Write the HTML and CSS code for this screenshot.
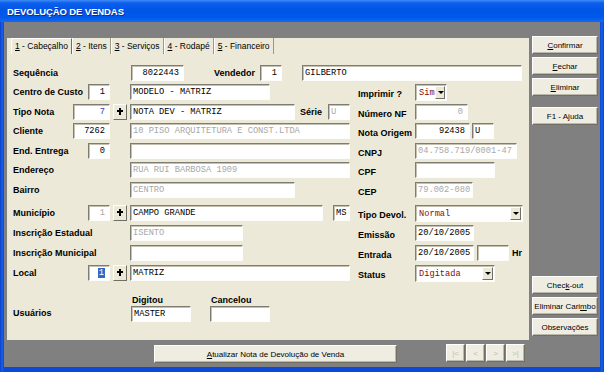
FILE: index.html
```html
<!DOCTYPE html>
<html lang="pt-BR">
<head>
    <meta charset="UTF-8">
    <title>Devolução de Vendas</title>
    <link rel="stylesheet" href="styles.css">
</head>
<body>
    <div class="window">
        <div class="titlebar">DEVOLUÇÃO DE VENDAS</div>

        <div class="client">
            <!-- Left: tabbed form + footer -->
            <div class="main-col">
                <div class="panel">
                    <div class="tabs">
                        <span class="tab active"><u>1</u> - Cabeçalho</span>
                        <span class="tab"><u>2</u> - Itens</span>
                        <span class="tab"><u>3</u> - Serviços</span>
                        <span class="tab"><u>4</u> - Rodapé</span>
                        <span class="tab"><u>5</u> - Financeiro</span>
                    </div>

                    <div class="form">
                        <!-- Sequência / Vendedor -->
                        <div class="row">
                            <div class="c-a"><span class="lbl">Sequência</span></div>
                            <div class="c-b"></div>
                            <span class="edit num w53 ml1">8022443</span>
                            <span class="lbl ml30 w46">Vendedor</span>
                            <span class="edit num w22">1</span>
                            <span class="edit w220 ml20">GILBERTO</span>
                        </div>

                        <div class="row">
                            <div class="c-a"><span class="lbl">Centro de Custo</span><span class="edit num w22">1</span></div>
                            <div class="c-b"></div>
                            <div class="c-c"><span class="edit w140">MODELO - MATRIZ</span></div>
                            <div class="c-d"><span class="lbl">Imprimir ?</span></div>
                            <div class="c-e">
                                <span class="combo w32"><span class="val red">Sim</span><span class="drop"></span></span>
                            </div>
                        </div>

                        <div class="row">
                            <div class="c-a"><span class="lbl">Tipo Nota</span><span class="edit num w37 blue">7</span></div>
                            <div class="c-b"><span class="plus"></span></div>
                            <div class="c-c">
                                <span class="edit w165">NOTA DEV - MATRIZ</span>
                                <span class="lbl serie">Série</span>
                                <span class="edit w22 off">U</span>
                            </div>
                            <div class="c-d"><span class="lbl">Número NF</span></div>
                            <div class="c-e"><span class="edit num w53 off">0</span></div>
                        </div>

                        <div class="row">
                            <div class="c-a"><span class="lbl">Cliente</span><span class="edit num w37">7262</span></div>
                            <div class="c-b"></div>
                            <div class="c-c"><span class="edit w220 off">10 PISO ARQUITETURA E CONST.LTDA</span></div>
                            <div class="c-d"><span class="lbl">Nota Origem</span></div>
                            <div class="c-e">
                                <span class="edit num w55">92438</span>
                                <span class="edit w22 ml2">U</span>
                            </div>
                        </div>

                        <div class="row">
                            <div class="c-a"><span class="lbl">End. Entrega</span><span class="edit num w22">0</span></div>
                            <div class="c-b"></div>
                            <div class="c-c"><span class="edit w220"></span></div>
                            <div class="c-d"><span class="lbl">CNPJ</span></div>
                            <div class="c-e"><span class="edit w102 off">04.758.719/0001-47</span></div>
                        </div>

                        <div class="row">
                            <div class="c-a"><span class="lbl">Endereço</span></div>
                            <div class="c-b"></div>
                            <div class="c-c"><span class="edit w220 off">RUA RUI BARBOSA 1909</span></div>
                            <div class="c-d"><span class="lbl">CPF</span></div>
                            <div class="c-e"><span class="edit w80"></span></div>
                        </div>

                        <div class="row">
                            <div class="c-a"><span class="lbl">Bairro</span></div>
                            <div class="c-b"></div>
                            <div class="c-c"><span class="edit w165 off">CENTRO</span></div>
                            <div class="c-d"><span class="lbl">CEP</span></div>
                            <div class="c-e"><span class="edit w58 off">79.002-080</span></div>
                        </div>

                        <div class="row tall gap-top">
                            <div class="c-a"><span class="lbl">Município</span><span class="edit num w22 off">1</span></div>
                            <div class="c-b"><span class="plus"></span></div>
                            <div class="c-c">
                                <span class="edit w193">CAMPO GRANDE</span>
                                <span class="edit w17 ml10">MS</span>
                            </div>
                            <div class="c-d"><span class="lbl">Tipo Devol.</span></div>
                            <div class="c-e">
                                <span class="combo w108"><span class="val red">Normal</span><span class="drop"></span></span>
                            </div>
                        </div>

                        <div class="row tall">
                            <div class="c-a"><span class="lbl nowrap">Inscrição Estadual</span></div>
                            <div class="c-b"></div>
                            <div class="c-c"><span class="edit w113 off">ISENTO</span></div>
                            <div class="c-d"><span class="lbl">Emissão</span></div>
                            <div class="c-e"><span class="edit w59">20/10/2005</span></div>
                        </div>

                        <div class="row tall">
                            <div class="c-a"><span class="lbl nowrap">Inscrição Municipal</span></div>
                            <div class="c-b"></div>
                            <div class="c-c"><span class="edit w113"></span></div>
                            <div class="c-d"><span class="lbl">Entrada</span></div>
                            <div class="c-e">
                                <span class="edit w59">20/10/2005</span>
                                <span class="edit w32 ml3"></span>
                                <span class="lbl ml3">Hr</span>
                            </div>
                        </div>

                        <div class="row tall">
                            <div class="c-a"><span class="lbl">Local</span><span class="edit num w22"><span class="sel">1</span></span></div>
                            <div class="c-b"><span class="plus"></span></div>
                            <div class="c-c"><span class="edit w220">MATRIZ</span></div>
                            <div class="c-d"><span class="lbl">Status</span></div>
                            <div class="c-e">
                                <span class="combo w80"><span class="val red">Digitada</span><span class="drop"></span></span>
                            </div>
                        </div>

                        <!-- Usuários -->
                        <div class="users">
                            <span class="lbl users-lbl">Usuários</span>
                            <div class="user-col">
                                <span class="lbl">Digitou</span>
                                <span class="edit w60">MASTER</span>
                            </div>
                            <div class="user-col">
                                <span class="lbl">Cancelou</span>
                                <span class="edit w60"></span>
                            </div>
                        </div>
                    </div>
                </div>

                <div class="footer">
                    <button class="btn update"><u>A</u>tualizar Nota de Devolução de Venda</button>
                    <div class="nav">
                        <button class="btn nav-btn">|&lt;</button>
                        <button class="btn nav-btn">&lt;</button>
                        <button class="btn nav-btn">&gt;</button>
                        <button class="btn nav-btn">&gt;|</button>
                    </div>
                </div>
            </div>

            <!-- Right: command buttons -->
            <div class="side">
                <button class="btn side-btn"><u>C</u>onfirmar</button>
                <button class="btn side-btn"><u>F</u>echar</button>
                <button class="btn side-btn"><u>E</u>liminar</button>
                <button class="btn side-btn help">F1 - Ajuda</button>

                <button class="btn side-btn push-down">Chec<u>k</u>-out</button>
                <button class="btn side-btn">Eliminar Cari<u>m</u>bo</button>
                <button class="btn side-btn">Observações</button>
            </div>
        </div>
    </div>
</body>
</html>
```

FILE: styles.css
```css
* {
    margin: 0;
    padding: 0;
    box-sizing: border-box;
}

:root {
    --face: #ece9d8;
    --shadow: #8a887c;
    --xp-blue: #0b4ad6;
    --ui-font: "Liberation Sans", Arial, sans-serif;
    --mono: "Liberation Mono", "Courier New", monospace;
}

body {
    width: 604px;
    height: 372px;
    overflow: hidden;
    font-family: var(--ui-font);
    background-color: var(--xp-blue);
}

/* Window frame */
.window {
    width: 604px;
    height: 372px;
    display: flex;
    flex-direction: column;
    background: linear-gradient(to right, #0a3fc8 0, #1a5ee8 2px, #0b4ad6 4px, #0b4ad6 600px, #1a5ee8 602px, #0a3fc8 604px);
}

.titlebar {
    height: 22px;
    padding-left: 7px;
    line-height: 23px;
    color: #fff;
    font-weight: bold;
    font-size: 9.5px;
    letter-spacing: -0.1px;
    background: linear-gradient(to bottom, #3f8cf7 0, #0d5eec 3px, #0055e6 10px, #0058ea 17px, #0a62f0 20px, #1c68e8 22px);
    text-shadow: 1px 1px 0 #0a2f9a;
}

.client {
    flex: 1;
    margin: 0 4px 5px 4px;
    background-color: #808080;
    display: flex;
}

.main-col {
    width: 525px;
    padding: 14px 0 0 3px;
}

.panel {
    width: 522px;
    height: 302px;
    background-color: var(--face);
}

/* Tabs */
.tabs {
    display: flex;
    height: 16px;
    margin: 2px 0 0 4px;
    font-size: 8.5px;
}

.tab {
    padding: 0 3px;
    line-height: 16px;
    color: #000;
    border-left: 1px solid #fff;
    border-right: 1px solid #9c998c;
    white-space: nowrap;
}

.tab.active {
    padding: 0 3px 0 3px;
    border-top: 1px solid #fff;
    line-height: 14px;
    border-right: 1px solid #716f64;
}

/* Form rows */
.form {
    padding: 9px 0 0 6px;
}

.row {
    display: flex;
    align-items: center;
    height: 19.5px;
}

.row.tall {
    height: 20px;
}

.row.gap-top {
    margin-top: 3.5px;
}

.c-a {
    width: 97px;
    display: flex;
    align-items: center;
    justify-content: space-between;
}

.c-b {
    width: 20px;
    display: flex;
    padding-left: 3px;
}

.c-c {
    width: 225px;
    display: flex;
    align-items: center;
}

.c-d {
    width: 60px;
    padding-left: 3px;
}

.c-e {
    display: flex;
    align-items: center;
}

.lbl {
    font-weight: bold;
    font-size: 9px;
    color: #000;
    white-space: nowrap;
}

.serie {
    margin-left: 5px;
    width: 28px;
}

/* Edit boxes */
.edit {
    display: block;
    height: 16px;
    padding: 0 2px;
    background-color: #fff;
    border: 1px solid;
    border-color: #7f7d72 #fdfdfb #fdfdfb #7f7d72;
    box-shadow: inset 1px 1px 0 #c4c1b2;
    font-family: var(--mono);
    font-size: 8.7px;
    line-height: 15px;
    color: #000;
    white-space: nowrap;
    overflow: hidden;
}

.edit.num {
    text-align: right;
    padding-right: 4px;
}

.edit.off { color: #a8a8a8; }
.blue { color: #3a3ab8 !important; }
.red { color: #8a0b0b; }

.sel {
    background-color: #316ac5;
    color: #fff;
    padding: 0 1px;
}

.w17 { width: 17px; }
.w22 { width: 22px; }
.w32 { width: 32px; }
.w37 { width: 37px; }
.w53 { width: 53px; }
.w55 { width: 55px; }
.w58 { width: 58px; }
.w59 { width: 59px; }
.w60 { width: 60px; }
.w80 { width: 80px; }
.w102 { width: 102px; }
.w108 { width: 108px; }
.w113 { width: 113px; }
.w140 { width: 140px; }
.w165 { width: 165px; }
.w193 { width: 193px; }
.w220 { width: 220px; }
.w46 { width: 46px; }

.ml1 { margin-left: 1px; }
.ml2 { margin-left: 2px; }
.ml3 { margin-left: 3px; }
.ml10 { margin-left: 10px; }
.ml20 { margin-left: 20px; }
.ml30 { margin-left: 30px; }

/* Lookup "+" button */
.plus {
    display: block;
    width: 14px;
    height: 16px;
    background-color: var(--face);
    border: 1px solid;
    border-color: #fff #716f64 #716f64 #fff;
    position: relative;
}

.plus::before,
.plus::after {
    content: "";
    position: absolute;
    background-color: #000;
}

.plus::before {
    left: 5px;
    top: 3px;
    width: 2px;
    height: 7px;
}

.plus::after {
    left: 3px;
    top: 5px;
    width: 6px;
    height: 2px;
}

/* Combo boxes */
.combo {
    display: flex;
    height: 17px;
    background-color: #fff;
    border: 1px solid;
    border-color: #7f7d72 #fdfdfb #fdfdfb #7f7d72;
    box-shadow: inset 1px 1px 0 #c4c1b2;
    padding: 1px 1px 1px 3px;
}

.combo .val {
    flex: 1;
    font-family: var(--mono);
    font-size: 8.7px;
    line-height: 14px;
    white-space: nowrap;
}

.drop {
    width: 11px;
    height: 13px;
    background-color: var(--face);
    border: 1px solid;
    border-color: #fff #716f64 #716f64 #fff;
    position: relative;
}

.drop::after {
    content: "";
    position: absolute;
    left: 2px;
    top: 4px;
    border-left: 3px solid transparent;
    border-right: 3px solid transparent;
    border-top: 3px solid #000;
}

/* Usuários block */
.users {
    display: flex;
    align-items: flex-end;
    margin-top: 12px;
}

.users-lbl {
    width: 118px;
    margin-bottom: 4px;
}

.user-col {
    display: flex;
    flex-direction: column;
    gap: 1px;
    width: 79px;
}

.user-col .lbl {
    padding-left: 1px;
}

/* Buttons */
.btn {
    display: flex;
    align-items: center;
    justify-content: center;
    height: 18px;
    background-color: #efede2;
    border: 1px solid;
    border-color: #fff #716f64 #716f64 #fff;
    box-shadow: inset -1px -1px 0 #bcb9aa;
    font-family: var(--ui-font);
    font-size: 8px;
    color: #000;
    white-space: nowrap;
}

.footer {
    display: flex;
    align-items: flex-start;
    margin-top: 4px;
}

.update {
    width: 243px;
    height: 18px;
    margin: 1px 0 0 147px;
}

.nav {
    display: flex;
    gap: 1px;
    margin-left: 49px;
}

.nav-btn {
    width: 19px;
    height: 18px;
    color: #c0bdb0;
    font-size: 8px;
}

.side {
    width: 71px;
    display: flex;
    flex-direction: column;
    padding: 14px 0 28px 3px;
}

.side-btn {
    width: 66px;
    margin-bottom: 3px;
}

.side-btn.help {
    margin-top: 8px;
}

.side-btn.push-down {
    margin-top: auto;
}
```
